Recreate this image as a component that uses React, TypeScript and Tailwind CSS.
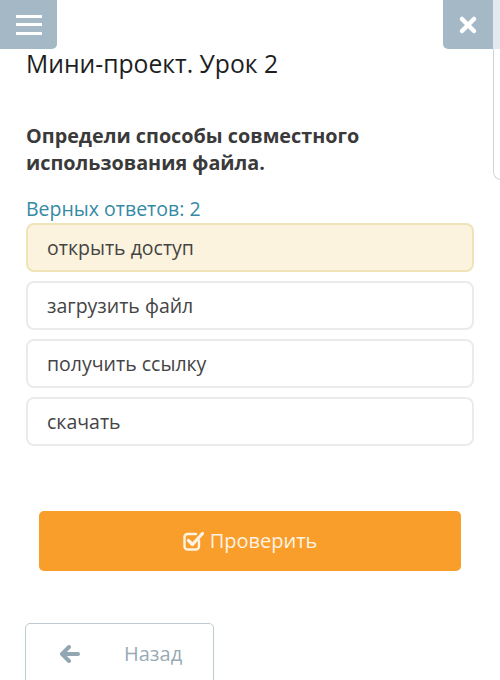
import React from 'react'

const options = ['открыть доступ', 'загрузить файл', 'получить ссылку', 'скачать']

function CheckSquareIcon() {
  return (
    <svg className="shrink-0" width="21" height="20" viewBox="0 0 21 20" fill="none" aria-hidden>
      <path
        d="M16 9.5v6a3 3 0 0 1-3 3H4.5a3 3 0 0 1-3-3V6a3 3 0 0 1 3-3H13"
        stroke="currentColor"
        strokeWidth={2.4}
        strokeLinecap="round"
      />
      <path d="M5.5 9.5l4 4L19.5 2.5" stroke="currentColor" strokeWidth={3.3} strokeLinecap="round" strokeLinejoin="round" />
    </svg>
  )
}

export default function App() {
  return (
    <div
      className="relative w-[500px] h-[680px] overflow-hidden bg-white"
      style={{ fontFamily: '"Open Sans", "Noto Sans", sans-serif' }}
    >
      {/* top bar */}
      <div className="flex h-[49px]">
        <button className="w-[57px] h-[49px] bg-[#a5b8c6] rounded-br-[5px] flex flex-col items-center justify-center gap-[5.5px]">
          <span className="block w-[26px] h-[3px] bg-white" />
          <span className="block w-[26px] h-[3px] bg-white" />
          <span className="block w-[26px] h-[3px] bg-white" />
        </button>
        <div className="flex-1" />
        <button className="w-[50px] h-[49px] bg-[#a5b8c6] rounded-bl-[5px] flex items-center justify-center">
          <svg width="20" height="20" viewBox="0 0 20 20" aria-hidden>
            <path d="M4 4l12 12M16 4L4 16" stroke="white" strokeWidth={4.5} strokeLinecap="round" />
          </svg>
        </button>
        <div className="w-[7px] bg-[#e3eaef]" />
      </div>

      {/* side panel edge peeking on the right */}
      <div className="absolute left-[493px] top-[49px] w-[20px] h-[131px] border-l border-b border-[#cfd6db] rounded-bl-[8px]" />

      <h1 className="px-[26px] mt-[-2px] text-[24.7px] leading-[34px] text-[#1e1e1e]">Мини-проект. Урок 2</h1>

      <p className="px-[26px] mt-[41px] text-[19.8px] leading-[27px] font-bold text-[#3a3a3a]">
        Определи способы совместного
        <br />
        использования файла.
      </p>

      <p className="px-[26px] mt-[20px] text-[19.5px] leading-[26px] text-[#3589a3]">Верных ответов: 2</p>

      <div className="px-[26px] mt-[1px] flex flex-col gap-[9px]">
        {options.map((o, i) => (
          <div
            key={o}
            className={
              i === 0
                ? 'h-[49px] flex items-center pl-[19px] rounded-[8px] border-2 border-[#efe3b8] bg-[#fbf3dd] text-[19.5px] text-[#444]'
                : 'h-[49px] flex items-center pl-[19px] rounded-[8px] border-2 border-[#ebebeb] bg-white text-[19.5px] text-[#444]'
            }
          >
            {o}
          </div>
        ))}
      </div>

      <button className="mx-[39px] mt-[65px] w-[422px] h-[60px] rounded-[5px] bg-[#f99d2b] flex items-center justify-center gap-[6px] text-[20px] text-[#fdf3e2]">
        <CheckSquareIcon />
        <span>Проверить</span>
      </button>

      <div className="ml-[25px] mt-[52px] w-[189px] h-[70px] border border-[#bfcbd2] rounded-t-[5px] flex items-start pt-[15px]">
        <svg className="ml-[34px] mt-[6px]" width="20" height="18" viewBox="0 0 20 18" aria-hidden>
          <path d="M9 2L2 9l7 7M2.5 9H18" stroke="#93a7b3" strokeWidth={4} strokeLinecap="round" strokeLinejoin="round" fill="none" />
        </svg>
        <span className="ml-[44px] text-[20px] leading-[30px] text-[#98aab5]">Назад</span>
      </div>
    </div>
  )
}
